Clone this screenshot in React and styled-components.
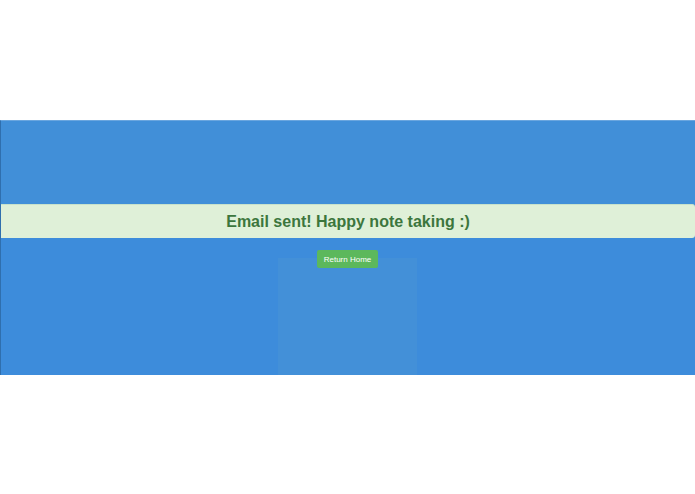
import React from "react";
import styled, { createGlobalStyle } from "styled-components";

const GlobalStyle = createGlobalStyle`
  html, body {
    margin: 0;
    padding: 0;
    background: #ffffff;
    font-family: "Liberation Sans", Arial, Helvetica, sans-serif;
  }
`;

const Page = styled.div`
  width: 695px;
  height: 494px;
  display: flex;
  flex-direction: column;
`;

const Spacer = styled.div`
  height: ${(p) => p.h}px;
  flex-shrink: 0;
`;

const Band = styled.section`
  height: 255px;
  display: flex;
  flex-direction: column;
  background: #418fd8;
  border-top: 1px solid #6aa6df;
  border-left: 1px solid #2f6fae;
  box-sizing: border-box;
`;

const Alert = styled.div`
  margin-top: 83px;
  height: 34px;
  display: flex;
  align-items: center;
  justify-content: center;
  padding-top: 1px;
  background: #dff0d8;
  color: #3c763d;
  font-size: 16px;
  font-weight: bold;
  border-top: 1px solid #c8e2cb;
  border-radius: 0 3px 3px 0;
  box-sizing: border-box;
`;

const Lower = styled.div`
  flex: 1;
  display: grid;
  grid-template-columns: 277px 139px 1fr;
  background: #3d8cdb;
`;

const Center = styled.div`
  display: flex;
  flex-direction: column;
  align-items: center;
  padding-top: 12px;
  background: linear-gradient(#3d8cdb 0, #3d8cdb 20px, #4390d8 20px);
`;

const Button = styled.button`
  height: 18px;
  padding: 0 7px;
  border: none;
  border-radius: 2px;
  background: #5cb85c;
  color: #ffffff;
  font-family: "Liberation Sans", Arial, sans-serif;
  font-size: 8px;
  cursor: pointer;
`;

export default function App() {
  return (
    <>
      <GlobalStyle />
      <Page>
        <Spacer h={120} />
        <Band>
          <Alert>Email sent! Happy note taking :)</Alert>
          <Lower>
            <div />
            <Center>
              <Button>Return Home</Button>
            </Center>
            <div />
          </Lower>
        </Band>
      </Page>
    </>
  );
}
